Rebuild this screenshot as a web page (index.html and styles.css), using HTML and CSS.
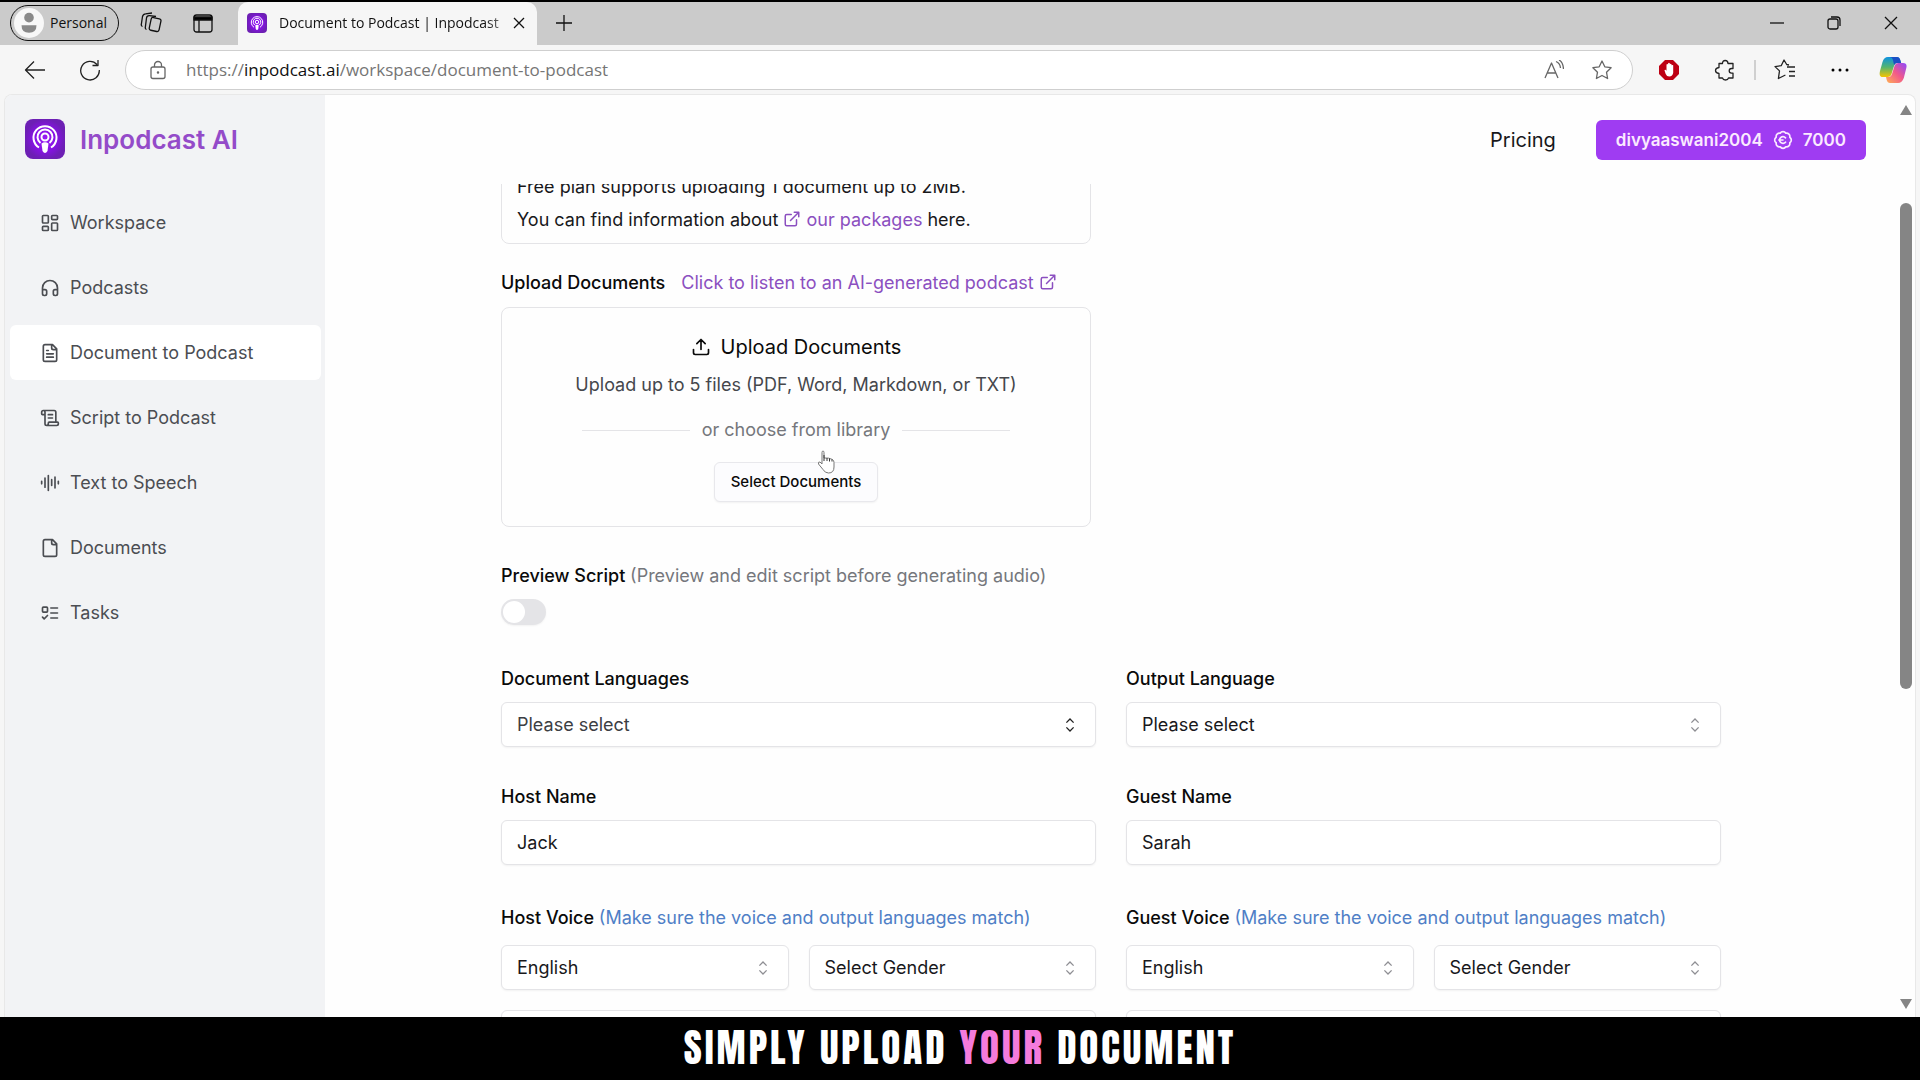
FILE: index.html
```html
<!DOCTYPE html>
<html lang="en">
<head>
<meta charset="utf-8">
<title>Document to Podcast | Inpodcast AI</title>
<link rel="stylesheet" href="styles.css">
</head>
<body>
<svg class="defs" aria-hidden="true">
  <defs>
    <radialGradient id="brand"><stop offset="0" stop-color="#9a1cf5"/><stop offset=".6" stop-color="#8512e2"/><stop offset="1" stop-color="#6d1fb4"/></radialGradient>
    <linearGradient id="cp-a" x1="0" y1="0" x2="0" y2="1"><stop offset="0" stop-color="#0d91e1"/><stop offset=".5" stop-color="#52b471"/><stop offset="1" stop-color="#f5c400"/></linearGradient>
    <linearGradient id="cp-b" x1="1" y1="0" x2="0" y2="1"><stop offset="0" stop-color="#8c48ff"/><stop offset=".5" stop-color="#f2598a"/><stop offset="1" stop-color="#ffb152"/></linearGradient>
    <symbol id="logo" viewBox="0 0 40 40">
      <rect width="40" height="40" rx="8" fill="url(#brand)"/>
      <g fill="none" stroke="#fff" stroke-width="2"><path d="M14 28.500a11.500 11.500 0 1 1 12 0"/><path d="M15.500 24a7.500 7.500 0 1 1 9 0"/><circle cx="20" cy="18" r="3.500"/></g>
      <path d="M16.500 24.500q3.500-2.500 7 0l-1 7.500q-2.500 4-5 0z" fill="#fff"/>
    </symbol>
    <symbol id="external" viewBox="0 0 24 24"><path d="M15 3h6v6M10 14 21 3M18 13v6a2 2 0 0 1-2 2H5a2 2 0 0 1-2-2V8a2 2 0 0 1 2-2h6"/></symbol>
    <symbol id="updown" viewBox="0 0 15 15"><path d="m4.500 5.500 3-3 3 3M4.500 9.500l3 3 3-3"/></symbol>
  </defs>
</svg>

<div class="tabstrip">
  <button class="profile"><svg viewBox="0 0 28 28"><circle cx="14" cy="14" r="14" fill="#f8f8f8"/><circle cx="14" cy="9" r="4.500" fill="#8a8a8a"/><path d="M7 16h14q0 7-7 7t-7-7z" fill="#8a8a8a"/></svg>Personal</button>
  <button class="chrome-btn" aria-label="Workspaces"><svg class="line" viewBox="0 0 22 22"><rect x="10" y="6" width="10" height="13" rx="2" transform="rotate(12 15 13)"/><path d="M6.500 17.500Q5 17 5.300 15.500L6.500 6q.4-2.500 3-2.300l6.500.8M2.500 14.500Q1 14 1.300 12.500L2.500 4.500Q3 2 5.500 1.800L12 1"/></svg></button>
  <button class="chrome-btn" aria-label="Tab actions"><svg class="line" viewBox="0 0 22 22"><rect x="2" y="3" width="18" height="17" rx="2.500"/><path d="M2 5h18v3H2zM7 8v12" fill="#000"/></svg></button>
  <div class="tab">
    <svg class="favicon"><use href="#logo"/></svg>
    <span class="tab-title">Document to Podcast | Inpodcast</span>
    <button class="tab-close" aria-label="Close tab"><svg class="line" viewBox="0 0 12 12"><path d="m1 1 10 10M11 1 1 11"/></svg></button>
  </div>
  <button class="chrome-btn" aria-label="New tab"><svg class="line" viewBox="0 0 22 22"><path d="M11 3v16M3 11h16"/></svg></button>
  <div class="window-controls">
    <button aria-label="Minimize"><svg class="line" viewBox="0 0 14 14"><path d="M0 7h14"/></svg></button>
    <button aria-label="Restore"><svg class="line" viewBox="0 0 14 14"><rect x="1" y="3" width="10" height="10" rx="2"/><path d="M4 1h6q3 0 3 3v6"/></svg></button>
    <button aria-label="Close"><svg class="line" viewBox="0 0 14 14"><path d="m1 1 12 12M13 1 1 13"/></svg></button>
  </div>
</div>

<div class="toolbar">
  <button class="chrome-btn" aria-label="Back"><svg class="line" viewBox="0 0 22 22"><path d="M21 11H2M10 2.500 1.500 11l8.500 8.500"/></svg></button>
  <button class="chrome-btn reload" aria-label="Refresh"><svg class="line" viewBox="0 0 22 22"><path d="M18 5.500A9.300 9.300 0 1 0 20.300 11M19 1v5.500h-5.500"/></svg></button>
  <div class="address">
    <svg class="line lock" viewBox="0 0 20 20"><rect x="3" y="7" width="14" height="11.500" rx="2"/><path d="M6.500 7V5a3.500 3.500 0 0 1 7 0v2"/><circle cx="10" cy="12.500" r=".6"/></svg>
    <p class="url">https://<b>inpodcast.ai</b>/workspace/document-to-podcast</p>
    <svg class="line" viewBox="0 0 20 20"><path d="M1 18 7.500 3 14 18M3.500 13h8M12 1.500q4 1.500 4.500 6.500M15 0q4 2 4.500 9"/></svg>
    <svg class="line" viewBox="0 0 20 20"><path d="m10 1 2.800 5.800 6.300.900-4.600 4.500 1.100 6.300-5.600-3-5.600 3 1.100-6.300L.900 7.700l6.300-.900z"/></svg>
  </div>
  <button class="chrome-btn" aria-label="Ad blocker"><svg viewBox="0 0 22 22"><path d="M7 1h8l6 6v8l-6 6H7l-6-6V7z" fill="#bd0013"/><path d="M6.500 11.500q0-1 1-.800l1 1V5.500q.9-1 1.600 0V4.300q.9-1 1.700 0v1q.9-.900 1.700 0v1q1-.700 1.700 0v7.500q-.500 3.700-4 3.700-2.500 0-3.500-2.500z" fill="#fff"/></svg></button>
  <button class="chrome-btn" aria-label="Extensions"><svg class="line" viewBox="0 0 22 22"><path d="M5 4.500h3.500q0-3 2.700-3t2.800 3h5v5h-1.500a2.300 2.300 0 0 0 0 4.600H19V19h-4.500q-.500 2-3 2t-3-2H5v-4.500q-3.500-.500-3.500-3T5 8.500z"/></svg></button>
  <span class="divider"></span>
  <button class="chrome-btn" aria-label="Favorites"><svg class="line" viewBox="0 0 22 22"><path d="M13 8h8M15 12.500h6M15 17h6M15 6l-2.300-.500L10 1 7.200 6.700l-6.200.900 4.500 4.300-1.100 7.600 7-3.500"/></svg></button>
  <button class="chrome-btn" aria-label="Settings and more"><svg viewBox="0 0 22 22"><circle cx="4" cy="11" r="1.500"/><circle cx="11" cy="11" r="1.500"/><circle cx="18" cy="11" r="1.500"/></svg></button>
  <button class="chrome-btn copilot" aria-label="Copilot"><svg viewBox="0 0 28 28"><path d="M9 1h9q2.500 0 3.500 4l.500 2h-4q-2 0-3 3l-2.500 8q-1 3-4 3H4q-4.500 0-3-6l2.500-9Q5 1 9 1z" fill="url(#cp-a)"/><path d="M18 1q2.500 0 3.300 3l.9 3H18q-2 0-3 2l-1-5q-.800-3-3-3z" fill="#1b4fc4"/><path d="M19 27h-8q-2.500 0-3.300-3L7 21h2.500q2.500 0 3.500-3l2.500-8q1-3 4-3H24q4.500 0 3.300 5l-2.500 10Q23 27 19 27z" fill="url(#cp-b)"/></svg></button>
</div>

<div class="page">
  <aside class="sidebar">
    <a class="brand" href="#"><svg class="brand-logo"><use href="#logo"/></svg><span>Inpodcast AI</span></a>
    <nav class="nav">
      <a href="#"><svg class="icon" viewBox="0 0 24 24"><rect x="3" y="3" width="7" height="9" rx="1"/><rect x="14" y="3" width="7" height="5" rx="1"/><rect x="14" y="12" width="7" height="9" rx="1"/><rect x="3" y="16" width="7" height="5" rx="1"/></svg>Workspace</a>
      <a href="#"><svg class="icon" viewBox="0 0 24 24"><path d="M3 14h3a2 2 0 0 1 2 2v3a2 2 0 0 1-2 2H5a2 2 0 0 1-2-2v-7a9 9 0 0 1 18 0v7a2 2 0 0 1-2 2h-1a2 2 0 0 1-2-2v-3a2 2 0 0 1 2-2h3"/></svg>Podcasts</a>
      <a href="#" class="active" aria-current="page"><svg class="icon" viewBox="0 0 24 24"><path d="M15 2H6a2 2 0 0 0-2 2v16a2 2 0 0 0 2 2h12a2 2 0 0 0 2-2V7zM14 2v4a2 2 0 0 0 2 2h4M10 9H8M16 13H8M16 17H8"/></svg>Document to Podcast</a>
      <a href="#"><svg class="icon" viewBox="0 0 24 24"><path d="M15 12h-5M15 8h-5M19 17V5a2 2 0 0 0-2-2H4M8 21h12a2 2 0 0 0 2-2v-1a1 1 0 0 0-1-1H11a1 1 0 0 0-1 1v1a2 2 0 1 1-4 0V5a2 2 0 1 0-4 0v2a1 1 0 0 0 1 1h3"/></svg>Script to Podcast</a>
      <a href="#"><svg class="icon" viewBox="0 0 24 24"><path d="M2 10v3M6 6v11M10 3v18M14 8v7M18 5v13M22 10v3"/></svg>Text to Speech</a>
      <a href="#"><svg class="icon" viewBox="0 0 24 24"><path d="M15 2H6a2 2 0 0 0-2 2v16a2 2 0 0 0 2 2h12a2 2 0 0 0 2-2V7zM14 2v4a2 2 0 0 0 2 2h4"/></svg>Documents</a>
      <a href="#"><svg class="icon" viewBox="0 0 24 24"><rect x="3" y="5" width="6" height="6" rx="1"/><path d="m3 17 2 2 4-4M13 6h8M13 12h8M13 18h8"/></svg>Tasks</a>
    </nav>
  </aside>

  <div class="content">
    <header class="topbar">
      <a class="pricing" href="#">Pricing</a>
      <button class="account">divyaaswani2004<svg class="icon" viewBox="0 0 24 24"><path d="M3.850 8.620a4 4 0 0 1 4.780-4.770 4 4 0 0 1 6.740 0 4 4 0 0 1 4.780 4.780 4 4 0 0 1 0 6.740 4 4 0 0 1-4.770 4.780 4 4 0 0 1-6.750 0 4 4 0 0 1-4.780-4.770 4 4 0 0 1 0-6.760ZM7 12h5M15 9.400a4 4 0 1 0 0 5.200"/></svg>7000</button>
    </header>

    <main class="scroller">
      <form class="form">
        <div class="note">
          <p>Free plan supports uploading 1 document up to 2MB.</p>
          <p>You can find information about <a href="#"><svg class="icon inline"><use href="#external"/></svg> our packages</a> here.</p>
        </div>

        <div class="label-row">
          <span>Upload Documents</span>
          <a href="#">Click to listen to an AI-generated podcast <svg class="icon inline"><use href="#external"/></svg></a>
        </div>
        <section class="dropzone">
          <h2><svg class="icon" viewBox="0 0 24 24"><path d="M21 15v4a2 2 0 0 1-2 2H5a2 2 0 0 1-2-2v-4M17 8l-5-5-5 5M12 3v12"/></svg>Upload Documents</h2>
          <p>Upload up to 5 files (PDF, Word, Markdown, or TXT)</p>
          <div class="or">or choose from library</div>
          <button type="button" class="select-docs">Select Documents</button>
          <svg class="pointer" viewBox="0 0 18 24"><path d="M5 14V2.500Q5 1 6 1t1 1.500V8q5-.5 8.500 1.500 1.500 1 1.500 3V17q0 6-5.500 6-3.500 0-5.500-3.500L1.500 14Q1 11.500 3 12z" fill="#fff" stroke="#777"/><path d="M7 5v6M10 8v3M12.500 8.500v3M15 9.500v2" stroke="#333" fill="none"/></svg>
        </section>

        <div class="preview">
          <label for="preview">Preview Script <span class="hint">(Preview and edit script before generating audio)</span></label>
          <input type="checkbox" role="switch" id="preview" class="switch">
        </div>

        <div class="fields">
          <div class="field">
            <label for="doc-lang">Document Languages</label>
            <div class="select dark"><select id="doc-lang"><option>Please select</option></select><svg><use href="#updown"/></svg></div>
          </div>
          <div class="field">
            <label for="out-lang">Output Language</label>
            <div class="select"><select id="out-lang"><option>Please select</option></select><svg><use href="#updown"/></svg></div>
          </div>
          <div class="field">
            <label for="host">Host Name</label>
            <input type="text" id="host" value="Jack">
          </div>
          <div class="field">
            <label for="guest">Guest Name</label>
            <input type="text" id="guest" value="Sarah">
          </div>
          <div class="field voice">
            <label for="host-voice">Host Voice <span class="tip">(Make sure the voice and output languages match)</span></label>
            <div class="pair">
              <div class="select"><select id="host-voice"><option>English</option></select><svg><use href="#updown"/></svg></div>
              <div class="select"><select aria-label="Host gender"><option>Select Gender</option></select><svg><use href="#updown"/></svg></div>
              <div class="select wide"><select aria-label="Host voice name"></select></div>
            </div>
          </div>
          <div class="field voice">
            <label for="guest-voice">Guest Voice <span class="tip">(Make sure the voice and output languages match)</span></label>
            <div class="pair">
              <div class="select"><select id="guest-voice"><option>English</option></select><svg><use href="#updown"/></svg></div>
              <div class="select"><select aria-label="Guest gender"><option>Select Gender</option></select><svg><use href="#updown"/></svg></div>
              <div class="select wide"><select aria-label="Guest voice name"></select></div>
            </div>
          </div>
        </div>
      </form>
    </main>
  </div>

  <div class="scrollbar" aria-hidden="true">
    <svg viewBox="0 0 12 10"><path d="M6 0 12 10H0z"/></svg>
    <div class="track"><div class="thumb"></div></div>
    <svg viewBox="0 0 12 10"><path d="M6 10 12 0H0z"/></svg>
  </div>
</div>

<p class="caption">SIMPLY UPLOAD <em>YOUR</em> DOCUMENT</p>
</body>
</html>
```

FILE: styles.css
```css
* { box-sizing: border-box; }

body {
  margin: 0;
  height: 100vh;
  display: flex;
  flex-direction: column;
  overflow: hidden;
  background: #f6f6f6;
  border-top: 2px solid #000;
  color: #18181b;
  font: 400 18px/24px Inter, "Liberation Sans", sans-serif;
}

p, h2 { margin: 0; }
a { color: inherit; text-decoration: none; }
button { border: 0; padding: 0; background: none; color: inherit; font: inherit; }
svg { display: block; flex: none; }
.defs { position: absolute; width: 0; height: 0; }

.icon {
  width: 20px;
  height: 20px;
  fill: none;
  stroke: currentColor;
  stroke-width: 2;
  stroke-linecap: round;
  stroke-linejoin: round;
}
.icon.inline { display: inline-block; width: 18px; height: 18px; vertical-align: -2px; }

/* Browser window */
.line { fill: none; stroke: currentColor; stroke-width: 1.3; stroke-linejoin: round; }

.tabstrip, .toolbar { font-family: "Open Sans", "Noto Sans", sans-serif; display: flex; align-items: center; flex: none; }
.tabstrip { height: 43px; padding: 0 0 2px 10px; background: #cbcbcb; color: #111; font-size: 14px; line-height: 20px; }
.profile {
  display: flex;
  align-items: center;
  gap: 6px;
  height: 36px;
  width: 109px;
  padding-left: 3px;
  border: 1px solid #111;
  border-radius: 18px;
}
.profile svg { width: 30px; height: 30px; }
.chrome-btn { display: grid; place-items: center; flex: none; width: 22px; height: 32px; }
.chrome-btn svg { width: 22px; height: 22px; }
.profile + .chrome-btn { margin: 0 30px 0 21px; }
.tab {
  display: flex;
  align-items: center;
  height: 43px;
  width: 299px;
  margin: 2px 16px 0 24px;
  padding: 0 12px 2px 9px;
  border-radius: 10px 10px 0 0;
  background: #f6f6f6;
}
.favicon { width: 20px; height: 20px; margin-right: 12px; }
.tab-title {
  flex: 1;
  white-space: nowrap;
  -webkit-mask-image: linear-gradient(to right, #000 88%, #0004);
  mask-image: linear-gradient(to right, #000 88%, #0004);
}
.tab-close svg { width: 12px; height: 12px; }
.window-controls { display: flex; gap: 43px; margin-left: auto; padding-right: 22px; }
.window-controls svg { width: 14px; height: 14px; }

.toolbar { height: 49px; padding: 0 13px 0 24px; color: #222; }
.reload { margin: 0 24px 0 33px; }
.address {
  display: flex;
  align-items: center;
  flex: 1;
  gap: 28px;
  height: 40px;
  margin-right: 25px;
  padding: 0 20px 0 22px;
  border: 1px solid #cfcfcf;
  border-radius: 20px;
  background: #fff;
  color: #666;
}
.address svg { width: 20px; height: 20px; }
.address .lock { margin-right: -10px; }
.url { flex: 1; color: #757575; font-size: 17px; }
.url b { color: #111; font-weight: 400; }
.divider { width: 2px; height: 20px; margin: 0 18px; background: #d0d0d0; }
.toolbar .address + .chrome-btn { margin-right: 34px; }
.divider + .chrome-btn { margin-right: 33px; }
.copilot { width: 28px; margin-left: 28px; }
.copilot svg { width: 28px; height: 28px; }

/* Web page */
.page {
  display: flex;
  flex: 1;
  min-height: 0;
  margin: 0 4px;
  overflow: hidden;
  border: 1px solid #e8e8e8;
  border-bottom: 0;
  border-radius: 8px 8px 0 0;
  background: #fefefe;
}

.sidebar { flex: none; width: 320px; padding: 24px 4px 0 5px; background: #f2f3f5; }
.brand {
  display: flex;
  align-items: center;
  gap: 15px;
  height: 40px;
  padding-left: 15px;
  color: #944bc9;
  font-size: 26px;
  font-weight: 600;
}
.brand span { padding-top: 2px; }
.brand-logo { width: 40px; height: 40px; }
.nav { display: flex; flex-direction: column; gap: 10px; margin-top: 36px; }
.nav a {
  display: flex;
  align-items: center;
  gap: 10px;
  height: 55px;
  padding-left: 30px;
  border-radius: 6px;
  color: #4b4d52;
}
.nav .active { background: #fff; }

.content { display: flex; flex: 1; flex-direction: column; min-width: 0; }
.topbar {
  display: flex;
  align-items: center;
  justify-content: flex-end;
  gap: 40px;
  flex: none;
  height: 89px;
  padding-right: 29px;
}
.pricing { font-size: 20px; }
.account {
  display: flex;
  align-items: center;
  gap: 10px;
  height: 40px;
  padding: 0 20px;
  border-radius: 6px;
  background: #9f3cf2;
  color: #fbeaff;
  font-size: 17px;
  font-weight: 600;
}

.scroller { flex: 1; min-height: 0; overflow: hidden; padding: 0 174px 0 176px; }
.form { max-width: 1220px; margin: 0 auto; }
.note {
  max-width: 590px;
  margin-top: -30px;
  padding: 15px 15px 7px;
  border: 1px solid #e4e4e7;
  border-radius: 8px;
  line-height: 33px;
}
.note a, .label-row a { color: #8b4fc0; }
.label-row { display: flex; gap: 16px; margin-top: 27px; }
.label-row span, .field label, .preview label { color: #0a0a0a; font-weight: 500; }

.dropzone {
  position: relative;
  display: flex;
  flex-direction: column;
  align-items: center;
  max-width: 590px;
  height: 220px;
  margin-top: 12px;
  padding-top: 27px;
  border: 1px solid #e4e4e7;
  border-radius: 8px;
}
.dropzone h2 { display: flex; align-items: center; gap: 10px; color: #0a0a0a; font-size: 20px; font-weight: 400; }
.dropzone p { margin-top: 14px; color: #45474c; }
.or { display: flex; align-items: center; gap: 12px; width: 428px; margin-top: 21px; color: #75777c; }
.or::before, .or::after { content: ""; flex: 1; height: 1px; background: #e4e4e7; }
.select-docs {
  height: 40px;
  margin-top: 20px;
  padding: 0 16px;
  border: 1px solid #e8e8ec;
  border-radius: 6px;
  background: #fcfcfe;
  box-shadow: 0 1px 2px #0000000d;
  color: #0a0a0a;
  font-size: 15px;
  font-weight: 500;
}
.pointer { position: absolute; left: 315px; top: 142px; width: 18px; height: 24px; }

.preview { display: flex; flex-direction: column; gap: 11px; margin-top: 37px; }
.preview .hint { color: #75777c; font-weight: 400; }
.switch {
  appearance: none;
  display: flex;
  align-items: center;
  width: 45px;
  height: 26px;
  margin: 0;
  padding: 2px;
  border-radius: 13px;
  background: #e4e4e7;
  box-shadow: 0 1px 2px #0000000d;
}
.switch::before { content: ""; width: 22px; height: 22px; border-radius: 50%; background: #fff; }

.fields { display: grid; grid-template-columns: 1fr 1fr; column-gap: 30px; row-gap: 38px; margin-top: 42px; }
.field { display: flex; flex-direction: column; gap: 11px; min-width: 0; }
.field.voice { gap: 15px; margin-top: 3px; }
.field .tip { color: #4f7fc6; font-weight: 400; }
.field input, .select select {
  appearance: none;
  width: 100%;
  height: 45px;
  margin: 0;
  padding: 0 15px;
  border: 1px solid #e4e4e7;
  border-radius: 6px;
  background: #fff;
  box-shadow: 0 1px 2px #0000000d;
  color: #18181b;
  font: inherit;
}
.select { display: grid; align-items: center; }
.select > * { grid-area: 1 / 1; }
.select svg {
  justify-self: end;
  width: 18px;
  height: 18px;
  margin-right: 17px;
  fill: none;
  stroke: #8e8e93;
  stroke-width: 1.1;
  pointer-events: none;
}
.select.dark svg { stroke: #222; }
.select.dark select { color: #3c3e43; }
.pair { display: grid; grid-template-columns: 1fr 1fr; gap: 20px; }
.pair .wide { grid-column: 1 / -1; }

.scrollbar { display: flex; flex-direction: column; flex: none; width: 20px; padding: 10px 3px 8px 5px; }
.scrollbar svg { width: 12px; height: 10px; fill: #858585; }
.track { display: flex; flex: 1; flex-direction: column; padding-top: 88px; }
.thumb { height: 61%; border-radius: 6px; background: #858585; }

.caption {
  flex: none;
  height: 63px;
  background: #000;
  color: #fff;
  font: 400 39px/62px Anton, "Liberation Sans Narrow", "Liberation Sans", sans-serif;
  letter-spacing: 3px;
  text-align: center;
}
.caption em { color: #f47bdc; font-style: normal; }
```
